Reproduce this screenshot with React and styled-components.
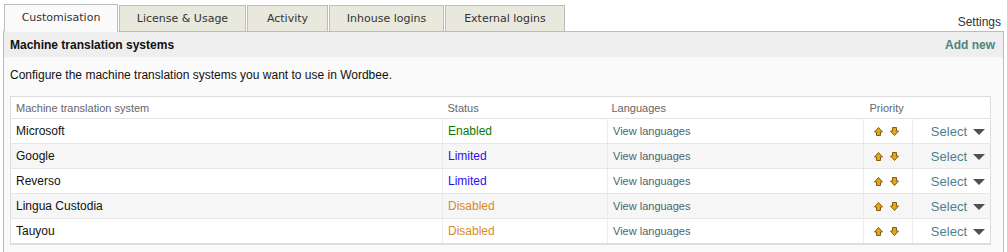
import React from "react";
import styled, { createGlobalStyle } from "styled-components";

const Global = createGlobalStyle`
  body {
    margin: 0;
    background: #ffffff;
    font-family: "Liberation Sans", Arial, sans-serif;
  }
`;

const Page = styled.div`
  width: 1007px;
  height: 252px;
  overflow: hidden;
`;

const TabBar = styled.div`
  display: flex;
  align-items: flex-end;
  height: 31px;
  padding-left: 4px;
  position: relative;
  z-index: 1;
`;

const Tab = styled.div`
  box-sizing: border-box;
  width: ${({ w }) => w}px;
  height: ${({ active }) => (active ? 28 : 26)}px;
  margin-right: 1px;
  border: 1px solid #bcbcbc;
  border-bottom: ${({ active }) => (active ? "1px solid #fafafa" : "none")};
  background: ${({ active }) => (active ? "#fafafa" : "#e8e8dc")};
  font-family: "DejaVu Sans", Verdana, sans-serif;
  font-size: 11px;
  color: #333;
  display: flex;
  align-items: center;
  justify-content: center;
  padding-bottom: ${({ active }) => (active ? 1 : 0)}px;
  margin-bottom: ${({ active }) => (active ? -1 : 0)}px;
`;

const Settings = styled.div`
  margin-left: auto;
  margin-right: 6px;
  margin-bottom: 2px;
  font-size: 12px;
  color: #333;
`;

const Panel = styled.div`
  box-sizing: border-box;
  width: 1001px;
  margin-left: 3px;
  border: 1px solid #bcbcbc;
  border-bottom: none;
  background: #fafafa;
  height: 221px;
`;

const PanelHeader = styled.div`
  height: 25px;
  background: #eeeeee;
  display: flex;
  align-items: center;
  justify-content: space-between;
  padding: 0 8px 0 6px;
`;

const Title = styled.div`
  font-weight: bold;
  font-size: 12px;
  color: #111;
`;

const AddNew = styled.div`
  font-weight: bold;
  font-size: 12px;
  color: #4a8585;
`;

const Intro = styled.div`
  font-size: 12px;
  color: #111;
  padding: 11px 0 0 6px;
  height: 28px;
`;

const Table = styled.table`
  margin-left: 6px;
  width: 981px;
  table-layout: fixed;
  border-collapse: collapse;
  border: 1px solid #dddddd;
  border-bottom: 2px solid #dddddd;
  background: #fff;
`;

const Th = styled.th`
  text-align: left;
  font-weight: normal;
  font-size: 11px;
  color: #666;
  height: 21px;
  padding: 0 0 0 ${({ pl }) => pl ?? 5}px;
  border-bottom: 1px solid #e2e2e2;
`;

const Tr = styled.tr`
  background: ${({ alt }) => (alt ? "#f6f6f6" : "#ffffff")};
`;

const Td = styled.td`
  height: 24px;
  padding: 0 0 0 5px;
  font-size: 12px;
  color: #111;
  border-bottom: 1px solid #e6e6e6;
  border-left: ${({ divide }) => (divide ? "1px solid #ececec" : "none")};
  text-align: ${({ right }) => (right ? "right" : "left")};
`;

const Status = styled.span`
  color: ${({ kind }) =>
    kind === "Enabled" ? "#0a7a0a" : kind === "Limited" ? "#2a10f0" : "#d9892a"};
`;

const LangLink = styled.span`
  font-size: 11px;
  color: #4b6470;
`;

const Arrows = styled.div`
  display: flex;
  gap: 7px;
  padding-left: 5px;
  align-items: center;
`;

const SelectBox = styled.div`
  display: inline-flex;
  align-items: center;
  gap: 6px;
  padding-right: 5px;
  font-size: 13px;
  color: #4d7f8e;
`;

const Caret = styled.span`
  width: 0;
  height: 0;
  border-left: 6px solid transparent;
  border-right: 6px solid transparent;
  border-top: 6px solid #4f4f4f;
  margin-top: 2px;
`;

const Arrow = ({ down }) => (
  <svg width="9" height="9" viewBox="0 0 9 9">
    <path
      d={
        down
          ? "M2.5 0.5 H6.5 V4 H8.5 L4.5 8.5 L0.5 4 H2.5 Z"
          : "M4.5 0.5 L8.5 5 H6.5 V8.5 H2.5 V5 H0.5 Z"
      }
      fill="#e0a81c"
      stroke="#8a5a10"
      strokeWidth="1"
      strokeLinejoin="round"
    />
  </svg>
);

const tabs = [
  ["Customisation", 114],
  ["License & Usage", 127],
  ["Activity", 81],
  ["Inhouse logins", 115],
  ["External logins", 120],
];

const rows = [
  ["Microsoft", "Enabled"],
  ["Google", "Limited"],
  ["Reverso", "Limited"],
  ["Lingua Custodia", "Disabled"],
  ["Tauyou", "Disabled"],
];

const cols = [432, 165, 256, 49, 78];

export default function App() {
  return (
    <Page>
      <Global />
      <TabBar>
        {tabs.map(([t, w], i) => (
          <Tab key={t} w={w} active={i === 0}>
            {t}
          </Tab>
        ))}
        <Settings>Settings</Settings>
      </TabBar>
      <Panel>
        <PanelHeader>
          <Title>Machine translation systems</Title>
          <AddNew>Add new</AddNew>
        </PanelHeader>
        <Intro>Configure the machine translation systems you want to use in Wordbee.</Intro>
        <Table>
          <colgroup>
            {cols.map((w, i) => (
              <col key={i} style={{ width: w }} />
            ))}
          </colgroup>
          <thead>
            <tr>
              <Th>Machine translation system</Th>
              <Th pl={5}>Status</Th>
              <Th pl={4}>Languages</Th>
              <Th pl={6}>Priority</Th>
              <Th />
            </tr>
          </thead>
          <tbody>
            {rows.map(([name, st], i) => (
              <Tr key={name} alt={i % 2 === 1}>
                <Td>{name}</Td>
                <Td divide>
                  <Status kind={st}>{st}</Status>
                </Td>
                <Td divide>
                  <LangLink>View languages</LangLink>
                </Td>
                <Td divide>
                  <Arrows>
                    <Arrow />
                    <Arrow down />
                  </Arrows>
                </Td>
                <Td divide right>
                  <SelectBox>
                    Select
                    <Caret />
                  </SelectBox>
                </Td>
              </Tr>
            ))}
          </tbody>
        </Table>
      </Panel>
    </Page>
  );
}
